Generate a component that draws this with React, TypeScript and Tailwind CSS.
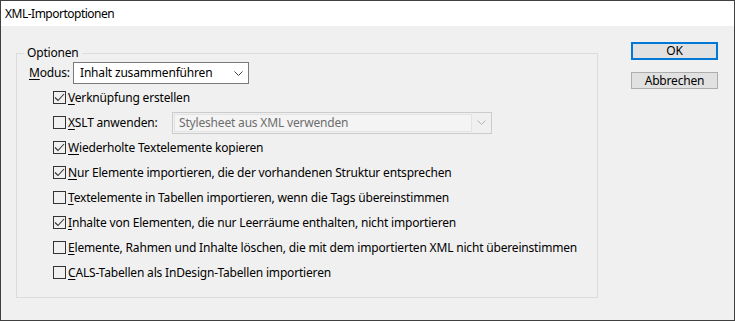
import { ReactNode } from "react";

const font = { fontFamily: '"Noto Sans", "Liberation Sans", sans-serif' };

function Chevron({ disabled }: { disabled?: boolean }) {
  return (
    <svg width="9" height="5" viewBox="0 0 9 5" className="shrink-0">
      <polyline
        points="0.5,0.5 4.5,4.5 8.5,0.5"
        fill="none"
        stroke={disabled ? "#b4b4b4" : "#444"}
        strokeWidth="1"
      />
    </svg>
  );
}

function Check({ checked, label }: { checked?: boolean; label: ReactNode }) {
  return (
    <div className="flex h-[25px] items-center">
      <div className="flex h-[13px] w-[13px] shrink-0 items-center justify-center border border-[#333] bg-[#f0f0f0]">
        {checked && (
          <svg width="11" height="11" viewBox="0 0 11 11">
            <polyline points="1,5.5 4,8.5 10,2" fill="none" stroke="#333" strokeWidth="1.1" />
          </svg>
        )}
      </div>
      <span className="ml-[2px] whitespace-nowrap">{label}</span>
    </div>
  );
}

function Mn({ l, rest }: { l: string; rest: string }) {
  return (
    <>
      <u className="underline-offset-2">{l}</u>
      {rest}
    </>
  );
}

export default function App() {
  return (
    <div
      className="flex h-[321px] w-[735px] flex-col border border-[#404040] bg-[#f0f0f0] text-[12px] leading-[16px] tracking-[-0.18px] text-black"
      style={font}
    >
      <div className="flex h-[25px] items-center bg-white pl-[4px] tracking-[-0.5px]">XML-Importoptionen</div>
      <div className="flex flex-1 pl-[15px]">
        <fieldset className="mt-[19px] h-[253px] w-[582px] border border-[#dcdcdc]">
          <legend className="ml-[7px] px-[3px]">Optionen</legend>
          <div className="pl-[12px] pt-[1px]">
            <div className="flex items-center">
              <span className="w-[44px]">
                <Mn l="M" rest="odus:" />
              </span>
              <div className="flex h-[22px] w-[176px] items-center justify-between border border-[#7a7a7a] bg-white pl-[6px] pr-[5px]">
                <span>Inhalt zusammenführen</span>
                <Chevron />
              </div>
            </div>
            <div className="mt-[1px] pl-[24px]">
              <Check checked label={<Mn l="V" rest="erknüpfung erstellen" />} />
              <div className="flex items-center">
                <div className="w-[119px]">
                  <Check label={<Mn l="X" rest="SLT anwenden:" />} />
                </div>
                <div className="flex h-[22px] w-[320px] items-center border border-[#cccccc] bg-[#f0f0f0] p-[1px]">
                  <div className="flex h-full flex-1 items-center border border-[#e3e3e3] bg-[#f4f4f4] pl-[4px] text-[#6d6d6d]">
                    Stylesheet aus XML verwenden
                  </div>
                  <div className="flex w-[18px] justify-center">
                    <Chevron disabled />
                  </div>
                </div>
              </div>
              <Check checked label={<Mn l="W" rest="iederholte Textelemente kopieren" />} />
              <Check
                checked
                label={<Mn l="N" rest="ur Elemente importieren, die der vorhandenen Struktur entsprechen" />}
              />
              <Check
                label={<Mn l="T" rest="extelemente in Tabellen importieren, wenn die Tags übereinstimmen" />}
              />
              <Check
                checked
                label={<Mn l="I" rest="nhalte von Elementen, die nur Leerräume enthalten, nicht importieren" />}
              />
              <Check
                label={
                  <Mn
                    l="E"
                    rest="lemente, Rahmen und Inhalte löschen, die mit dem importierten XML nicht übereinstimmen"
                  />
                }
              />
              <Check label={<Mn l="C" rest="ALS-Tabellen als InDesign-Tabellen importieren" />} />
            </div>
          </div>
        </fieldset>
        <div className="ml-[33px] mt-[16px] flex flex-col">
          <button className="h-[18px] w-[87px] border-2 border-[#0078d7] bg-[#e1e1e1] leading-none">OK</button>
          <button className="mt-[12px] h-[17px] w-[87px] border border-[#adadad] bg-[#e1e1e1] leading-none">
            Abbrechen
          </button>
        </div>
      </div>
    </div>
  );
}
